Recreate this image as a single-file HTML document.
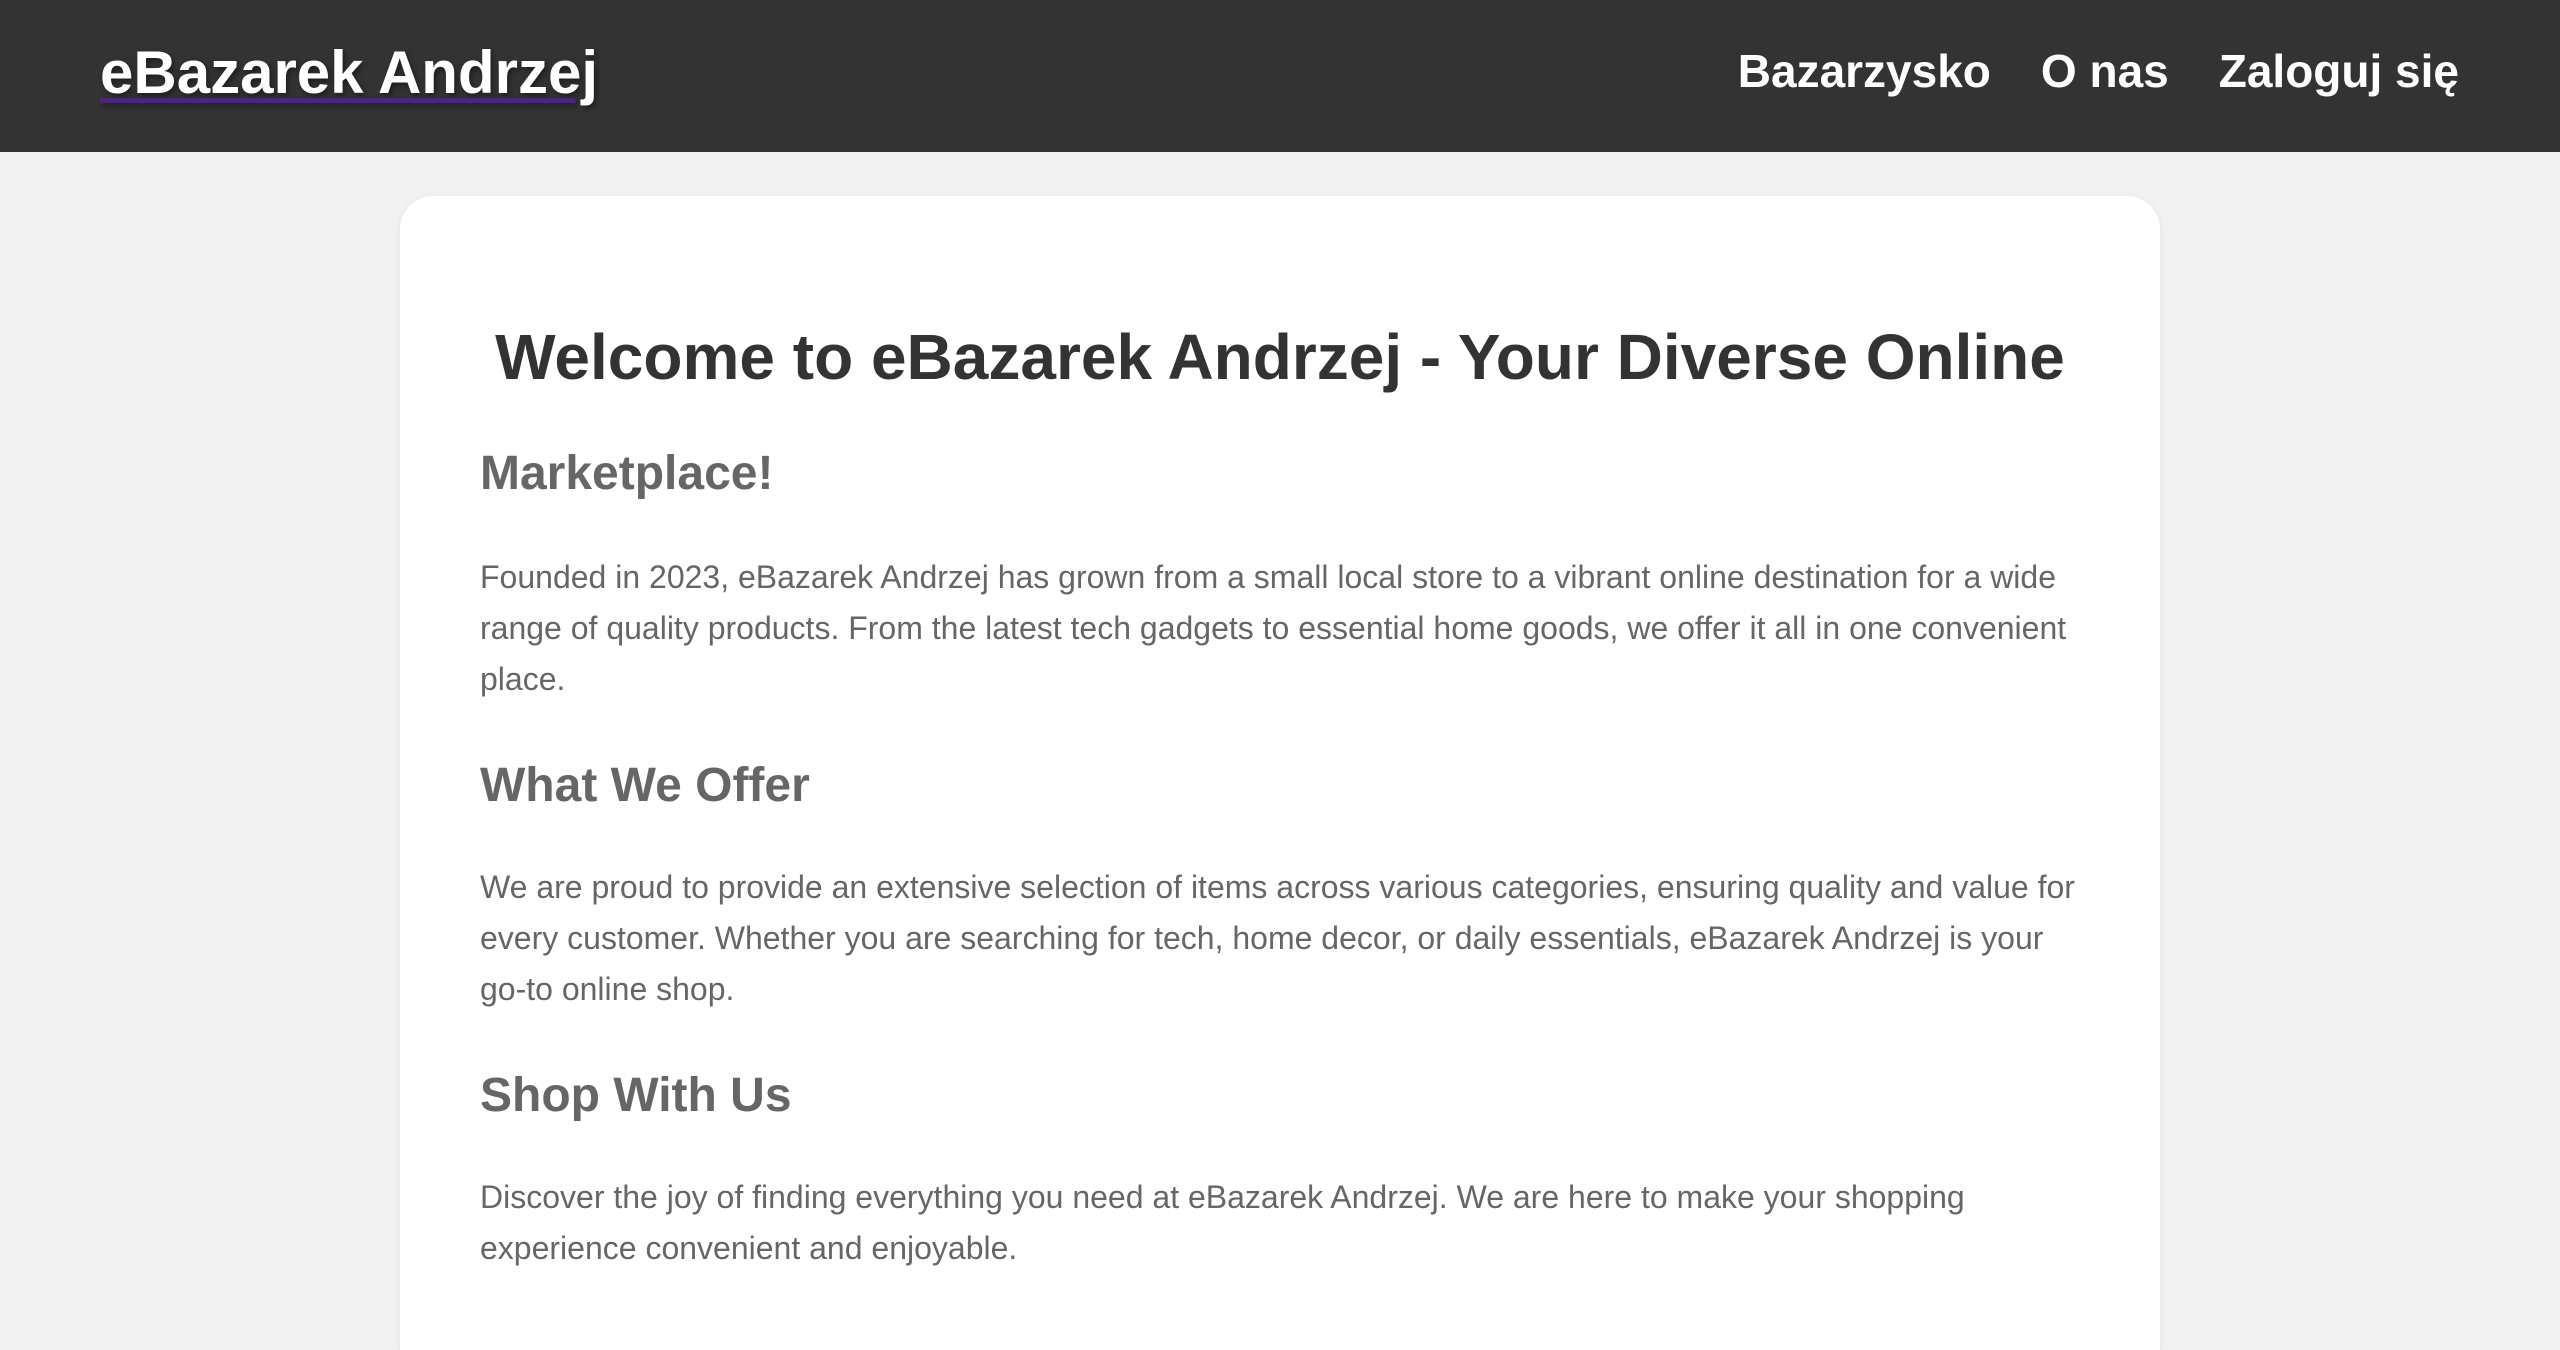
<!DOCTYPE html>
<html><head><meta charset="utf-8"><style>
html,body{margin:0;padding:0;overflow:hidden;height:1350px}
body{width:2560px;height:1350px;overflow:hidden;background:#f2f2f2;font-family:"Liberation Sans",Arial,sans-serif;position:relative}
header{position:absolute;left:0;top:0;width:2560px;height:152px;background:#333}
.logo{position:absolute;left:100px;top:43px;font-size:60px;line-height:60px;font-weight:bold;color:#fff;text-decoration:underline;text-decoration-color:#4f2384;text-decoration-thickness:5px;text-underline-offset:5px;text-shadow:2px 3px 6px rgba(0,0,0,.45);white-space:nowrap}
nav{position:absolute;right:101px;top:48px;font-size:46px;line-height:46px;font-weight:bold;color:#fff;white-space:nowrap}
nav span{margin-left:50px}
.card{position:absolute;left:400px;top:196px;width:1760px;height:1154px;background:#fff;border-radius:33px 33px 0 0;box-shadow:0 2px 8px rgba(0,0,0,.08);box-sizing:border-box;padding:123px 80px 0 80px;overflow:hidden}
h1{margin:0;font-size:64px;line-height:77px;color:#333;text-align:center;white-space:nowrap}
h2{margin:49px 0 49px;font-size:48px;line-height:58px;color:#666}
h2.n{margin:52px 0 47px}
p{margin:0;font-size:32px;line-height:51px;color:#666;white-space:nowrap}
</style></head><body>
<header><div class="logo">eBazarek Andrzej</div><nav><span>Bazarzysko</span><span>O nas</span><span>Zaloguj się</span></nav></header>
<div class="card">
<h1>Welcome to eBazarek Andrzej - Your Diverse Online</h1>
<h2>Marketplace!</h2>
<p>Founded in 2023, eBazarek Andrzej has grown from a small local store to a vibrant online destination for a wide<br>range of quality products. From the latest tech gadgets to essential home goods, we offer it all in one convenient<br>place.</p>
<h2 class="n">What We Offer</h2>
<p>We are proud to provide an extensive selection of items across various categories, ensuring quality and value for<br>every customer. Whether you are searching for tech, home decor, or daily essentials, eBazarek Andrzej is your<br>go-to online shop.</p>
<h2 class="n">Shop With Us</h2>
<p>Discover the joy of finding everything you need at eBazarek Andrzej. We are here to make your shopping<br>experience convenient and enjoyable.</p>
</div>
</body></html>
